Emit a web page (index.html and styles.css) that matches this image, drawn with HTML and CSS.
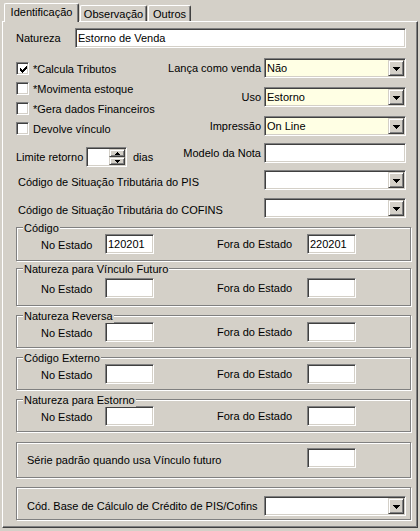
FILE: index.html
```html
<!DOCTYPE html>
<html lang="pt">
<head>
<meta charset="utf-8">
<title>Natureza de Operação</title>
<link rel="stylesheet" href="styles.css">
</head>
<body>
<div class="tabs">
  <div class="tab active">Identificação</div>
  <div class="tab obs">Observação</div>
  <div class="tab outros">Outros</div>
</div>
<div class="panel">
  <div class="upper">
    <div class="row natureza">
      <span class="lbl">Natureza</span>
      <div class="field">Estorno de Venda</div>
    </div>

    <div class="mid">
      <div class="checks">
        <div class="check"><span class="box"><svg width="7" height="7" viewBox="0 0 7 7" shape-rendering="crispEdges"><rect x="0" y="2" width="1" height="3"/><rect x="1" y="3" width="1" height="3"/><rect x="2" y="4" width="1" height="3"/><rect x="3" y="3" width="1" height="3"/><rect x="4" y="2" width="1" height="3"/><rect x="5" y="1" width="1" height="3"/><rect x="6" y="0" width="1" height="3"/></svg></span>*Calcula Tributos</div>
        <div class="check"><span class="box"></span>*Movimenta estoque</div>
        <div class="check"><span class="box"></span>*Gera dados Financeiros</div>
        <div class="check"><span class="box"></span>Devolve vínculo</div>
        <div class="limite">
          <span class="lim-lbl">Limite retorno</span>
          <div class="field spin">
            <div class="spin-btns">
              <span class="btn sb"><svg width="5" height="3" viewBox="0 0 5 3" shape-rendering="crispEdges"><path d="M2 0h1v1h1v1h1v1h-5v-1h1v-1h1z"/></svg></span>
              <span class="btn sb"><svg width="5" height="3" viewBox="0 0 5 3" shape-rendering="crispEdges"><path d="M0 0h5v1h-1v1h-1v1h-1v-1h-1v-1h-1z"/></svg></span>
            </div>
          </div>
          <span>dias</span>
        </div>
      </div>

      <div class="opts">
        <span class="olbl">Lança como venda</span>
        <div class="field select yellow"><span class="val">Não</span><span class="btn drop"><svg width="7" height="4" viewBox="0 0 7 4" shape-rendering="crispEdges"><path d="M0 0h7v1h-1v1h-1v1h-1v1h-1v-1h-1v-1h-1v-1h-1z"/></svg></span></div>
        <span class="olbl">Uso</span>
        <div class="field select yellow"><span class="val">Estorno</span><span class="btn drop"><svg width="7" height="4" viewBox="0 0 7 4" shape-rendering="crispEdges"><path d="M0 0h7v1h-1v1h-1v1h-1v1h-1v-1h-1v-1h-1v-1h-1z"/></svg></span></div>
        <span class="olbl">Impressão</span>
        <div class="field select yellow"><span class="val">On Line</span><span class="btn drop"><svg width="7" height="4" viewBox="0 0 7 4" shape-rendering="crispEdges"><path d="M0 0h7v1h-1v1h-1v1h-1v1h-1v-1h-1v-1h-1v-1h-1z"/></svg></span></div>
        <span class="olbl tight">Modelo da Nota</span>
        <div class="field tight"></div>
      </div>
    </div>

    <div class="row pis">
      <span class="lbl">Código de Situação Tributária do PIS</span>
      <div class="field select"><span class="val"></span><span class="btn drop"><svg width="7" height="4" viewBox="0 0 7 4" shape-rendering="crispEdges"><path d="M0 0h7v1h-1v1h-1v1h-1v1h-1v-1h-1v-1h-1v-1h-1z"/></svg></span></div>
    </div>
    <div class="row cofins">
      <span class="lbl">Código de Situação Tributária do COFINS</span>
      <div class="field select"><span class="val"></span><span class="btn drop"><svg width="7" height="4" viewBox="0 0 7 4" shape-rendering="crispEdges"><path d="M0 0h7v1h-1v1h-1v1h-1v1h-1v-1h-1v-1h-1v-1h-1z"/></svg></span></div>
    </div>
  </div>

  <div class="group first">
    <span class="legend">Código</span>
    <div class="pair"><span class="l1">No Estado</span><div class="field small">120201</div><span class="l2">Fora do Estado</span><div class="field small">220201</div></div>
  </div>
  <div class="group tall">
    <span class="legend">Natureza para Vínculo Futuro</span>
    <div class="pair"><span class="l1">No Estado</span><div class="field small"></div><span class="l2">Fora do Estado</span><div class="field small"></div></div>
  </div>
  <div class="group">
    <span class="legend">Natureza Reversa</span>
    <div class="pair"><span class="l1">No Estado</span><div class="field small"></div><span class="l2">Fora do Estado</span><div class="field small"></div></div>
  </div>
  <div class="group">
    <span class="legend">Código Externo</span>
    <div class="pair"><span class="l1">No Estado</span><div class="field small"></div><span class="l2">Fora do Estado</span><div class="field small"></div></div>
  </div>
  <div class="group">
    <span class="legend">Natureza para Estorno</span>
    <div class="pair"><span class="l1">No Estado</span><div class="field small"></div><span class="l2">Fora do Estado</span><div class="field small"></div></div>
  </div>
  <div class="group single">
    <div class="line"><span class="wide-lbl">Série padrão quando usa Vínculo futuro</span><div class="field small"></div></div>
  </div>
  <div class="group combo">
    <div class="line"><span class="wide-lbl flex">Cód. Base de Cálculo de Crédito de PIS/Cofins</span><div class="field select"><span class="val"></span><span class="btn drop"><svg width="7" height="4" viewBox="0 0 7 4" shape-rendering="crispEdges"><path d="M0 0h7v1h-1v1h-1v1h-1v1h-1v-1h-1v-1h-1v-1h-1z"/></svg></span></div></div>
  </div>
</div>
</body>
</html>
```

FILE: styles.css
```css
* { box-sizing: border-box; }

body {
  margin: 0;
  width: 420px;
  height: 531px;
  overflow: hidden;
  background: #d4d0c8;
  color: #000;
  font: 11px "Liberation Sans", Arial, sans-serif;
}

/* ---------- tabs ---------- */
.tabs {
  display: flex;
  align-items: flex-end;
  height: 21px;
  padding-left: 4px;
}
.tab {
  height: 16px;
  line-height: 16px;
  text-align: center;
  background: #d4d0c8;
  border-top: 1px solid #fff;
  border-left: 1px solid #fff;
  border-right: 1px solid #404040;
  box-shadow: inset -1px 0 #808080;
  border-radius: 2px 2px 0 0;
}
.tab.active {
  width: 75px;
  height: 19px;
  line-height: 17px;
  margin-bottom: -1px;
  position: relative;
  z-index: 1;
}
.tab.obs { width: 67px; margin-left: 1px; }
.tab.outros { width: 43px; margin-left: 1px; }

/* ---------- panel ---------- */
.panel {
  margin-left: 2px;
  width: 416px;
  height: 507px;
  border-top: 1px solid #fff;
  border-left: 1px solid #fff;
  border-right: 1px solid #404040;
  border-bottom: 1px solid #404040;
  box-shadow: inset -1px -1px #808080;
  padding: 6px 6px 0 13px;
}
.upper { margin-right: 5px; }

.row {
  display: flex;
  align-items: center;
  height: 20px;
}

/* sunken edit field */
.field {
  height: 20px;
  background: #fff;
  border: 1px solid;
  border-color: #808080 #fff #fff #808080;
  box-shadow: inset 1px 1px #404040, inset -1px -1px #d4d0c8;
  padding: 0 2px;
  line-height: 18px;
  white-space: nowrap;
  overflow: hidden;
}

/* raised button face */
.btn {
  display: flex;
  align-items: center;
  justify-content: center;
  background: #d4d0c8;
  border: 1px solid;
  border-color: #d4d0c8 #404040 #404040 #d4d0c8;
  box-shadow: inset 1px 1px #fff, inset -1px -1px #808080;
}

.natureza .lbl { width: 59px; }
.natureza .field { flex: 1; }

/* ---------- checks + options ---------- */
.mid {
  display: flex;
  margin-top: 10px;
}
.checks { width: 150px; flex: none; }
.check {
  display: flex;
  align-items: center;
  gap: 4px;
  height: 20px;
  padding-top: 1px;
}
.box {
  width: 13px;
  height: 13px;
  flex: none;
  background: #fff;
  border: 1px solid;
  border-color: #808080 #fff #fff #808080;
  box-shadow: inset 1px 1px #404040, inset -1px -1px #d4d0c8;
  padding: 2px;
}
.box svg { display: block; margin: 1px; }

.limite {
  display: flex;
  align-items: center;
  height: 20px;
  margin-top: 9px;
}
.lim-lbl { width: 70px; }
.spin {
  width: 41px;
  padding: 1px;
  display: flex;
  justify-content: flex-end;
  margin-right: 6px;
}
.spin-btns {
  width: 16px;
  display: flex;
  flex-direction: column;
}
.sb { height: 9px; }
.sb svg { display: block; }

.opts {
  flex: 1;
  display: grid;
  grid-template-columns: 1fr 142px;
  column-gap: 3px;
  row-gap: 9px;
  align-items: center;
  align-content: start;
}
.olbl { text-align: right; }
.tight { margin-top: -2px; }

/* combobox */
.select {
  display: flex;
  padding: 1px 1px 1px 2px;
}
.select .val { flex: 1; line-height: 16px; }
.drop { width: 16px; height: 16px; flex: none; padding-top: 1px; }
.drop svg { display: block; }
.yellow { background: #ffffe4; }

.pis { margin-top: 3px; }
.cofins { margin-top: 8px; }
.pis .lbl, .cofins .lbl { flex: 1; padding-left: 2px; padding-top: 3px; }
.pis .select, .cofins .select { width: 142px; }

/* ---------- etched groups ---------- */
.group {
  position: relative;
  margin-top: 9px;
  height: 33px;
  padding-top: 6px;
  border: 1px solid #808080;
  box-shadow: inset 1px 1px #fff, 1px 1px #fff;
}
.group.first { height: 34px; }
.group.tall { margin-top: 7px; height: 38px; padding-top: 9px; }
.group.single { margin-top: 10px; height: 36px; padding-top: 5px; }
.group.combo { padding-top: 8px; }

.legend {
  position: absolute;
  top: -6px;
  left: 6px;
  padding: 0 1px;
  line-height: 13px;
  background: #d4d0c8;
}

.pair {
  display: flex;
  align-items: center;
  height: 20px;
  padding-left: 24px;
}
.pair .l1 { width: 64px; padding-top: 2px; }
.pair .l2 { width: 90px; margin-left: 63px; }
.small { width: 49px; flex: none; }

.line {
  display: flex;
  align-items: center;
  height: 20px;
  padding-left: 10px;
  padding-right: 4px;
}
.wide-lbl { width: 280px; padding-top: 3px; }
.wide-lbl.flex { width: auto; flex: 1; padding-top: 0; }
.line .select { width: 142px; }
```
